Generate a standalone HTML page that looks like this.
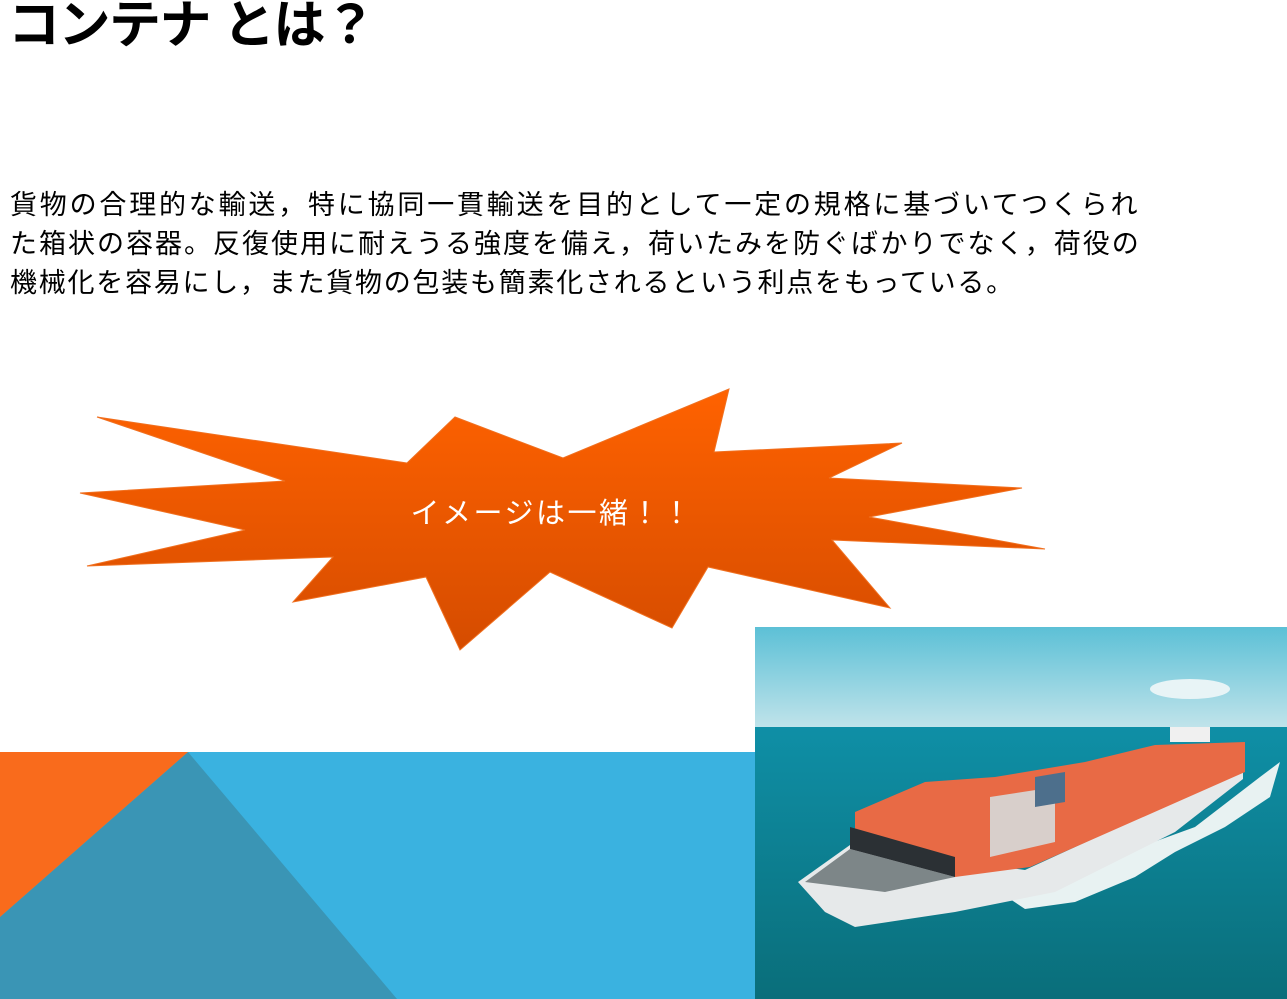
<!DOCTYPE html>
<html><head><meta charset="utf-8"><style>
html,body{margin:0;padding:0;background:#fff;width:1287px;height:999px;overflow:hidden;position:relative;font-family:"Liberation Sans","Noto Sans CJK JP",sans-serif}
.t{position:absolute;left:8px;top:-17px;font-size:52px;font-weight:bold;color:#000;white-space:nowrap;letter-spacing:-1.5px}
.b{position:absolute;left:10px;top:186px;font-size:27px;line-height:39px;color:#000;white-space:nowrap}
svg{position:absolute}
</style></head><body>
<div class="t">コンテナ とは？</div>
<div class="b"><div style="letter-spacing:2.8px">貨物の合理的な輸送，特に協同一貫輸送を目的として一定の規格に基づいてつくられ</div><div style="letter-spacing:2.0px">た箱状の容器。反復使用に耐えうる強度を備え，荷いたみを防ぐばかりでなく，荷役の</div><div style="letter-spacing:1.75px">機械化を容易にし，また貨物の包装も簡素化されるという利点をもっている。</div></div>
<svg width="1287" height="999" style="left:0;top:0">
<defs><linearGradient id="g" x1="0" y1="0" x2="0" y2="1"><stop offset="0" stop-color="#ff6200"/><stop offset="1" stop-color="#d54c00"/></linearGradient></defs>
<polygon points="97,417 407,463 455,417 563,458 729,389 714,452 902,443 829,478 1022,488 869,517 1045,549 832,540 890,608 708,567 672,628 550,572 460,650 426,577 293,602 333,557 87,566 245,530 80,493 285,481" fill="url(#g)" stroke="#f07020" stroke-width="1"/>
<text x="552" y="523" fill="#fff" font-size="29" letter-spacing="2.5" text-anchor="middle" font-family="Liberation Sans, Noto Sans CJK JP, sans-serif">イメージは一緒！！</text>
<rect x="0" y="752" width="755" height="247" fill="#3ab2e0"/>
<polygon points="188,752 397,999 0,999 0,917" fill="#3a95b5"/>
<polygon points="0,752 188,752 0,917" fill="#f96b1c"/>
</svg>
<svg width="532" height="372" viewBox="0 0 532 372" style="left:755px;top:627px">
<defs>
<linearGradient id="sky" x1="0" y1="0" x2="0" y2="1"><stop offset="0" stop-color="#5cc0d6"/><stop offset="1" stop-color="#bfe3ea"/></linearGradient>
<linearGradient id="sea" x1="0" y1="0" x2="0" y2="1"><stop offset="0" stop-color="#0f8fa6"/><stop offset="1" stop-color="#0a6e7a"/></linearGradient>
</defs>
<rect width="532" height="100" fill="url(#sky)"/>
<rect y="100" width="532" height="272" fill="url(#sea)"/>
<ellipse cx="435" cy="62" rx="40" ry="10" fill="#e8f4f6"/>
<polygon points="255,272 330,240 440,200 505,150 525,135 515,170 470,200 420,225 380,250 320,275 270,282" fill="#e8f2f2"/>
<polygon points="43,255 95,218 270,243 488,143 488,152 420,205 300,265 200,285 100,300 70,285" fill="#e6e9ea"/>
<polygon points="50,255 95,222 200,250 130,265" fill="#7d8688"/>
<polygon points="100,185 170,155 240,150 330,135 400,118 490,115 490,145 275,240 200,250 100,210" fill="#e86a45"/>
<polygon points="95,200 200,230 200,250 95,222" fill="#2b3034"/>
<polygon points="235,170 300,160 300,215 235,230" fill="#d8cfcb"/>
<polygon points="280,150 310,145 310,175 280,180" fill="#4d6f8c"/>
<rect x="415" y="100" width="40" height="15" fill="#f0f0f0"/>
</svg>
</body></html>
